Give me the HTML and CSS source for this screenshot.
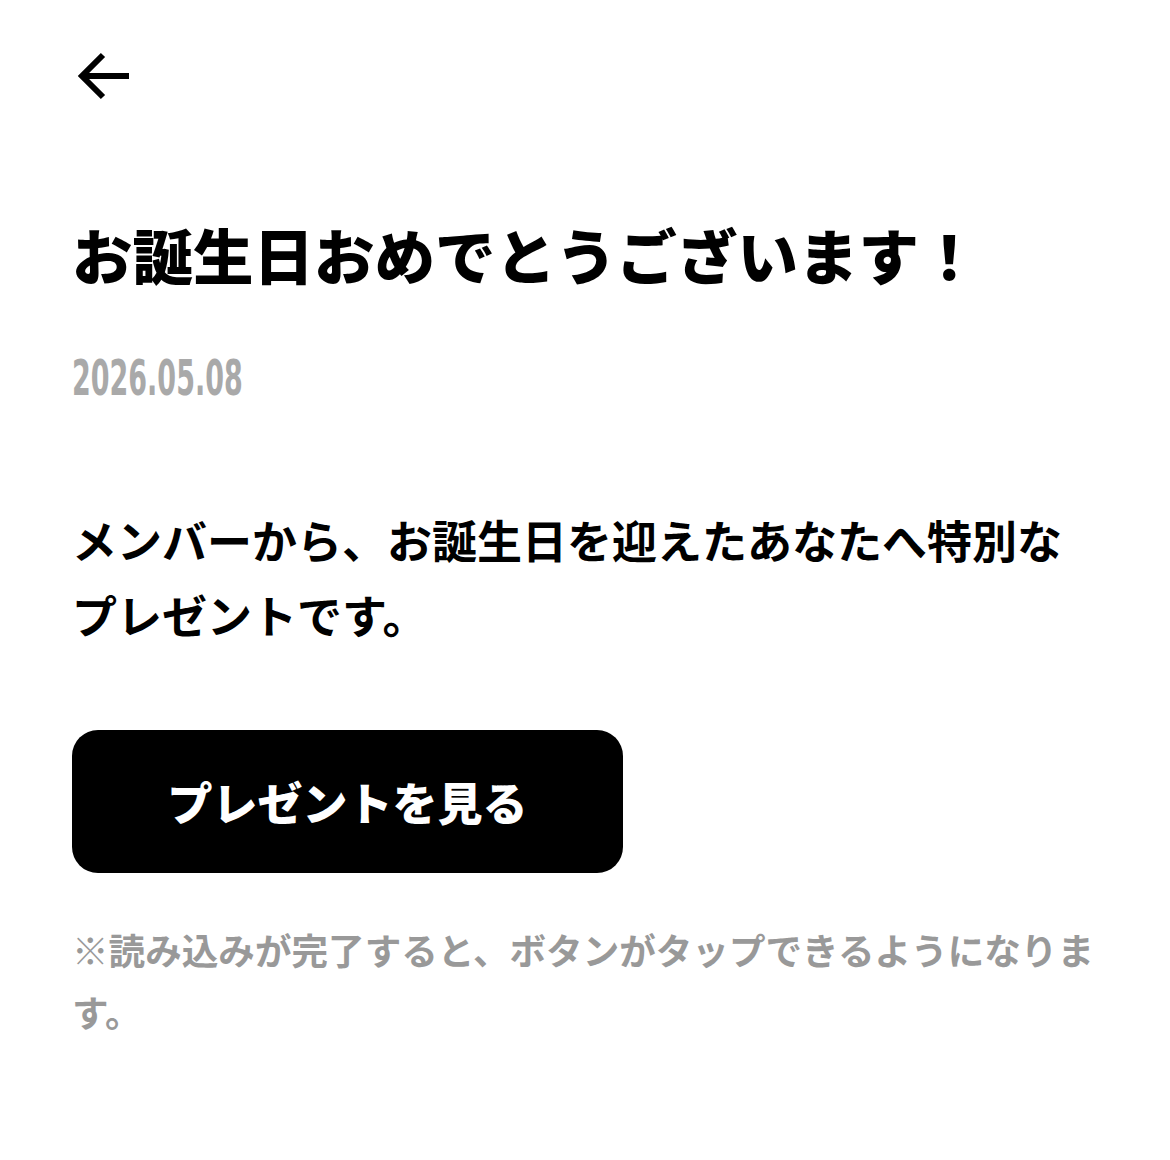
FILE: index.html
```html
<!DOCTYPE html>
<html lang="ja">
<head>
<meta charset="utf-8">
<title>お誕生日おめでとうございます！</title>
<link rel="stylesheet" href="styles.css">
</head>
<body>
<div class="page">
  <header class="header">
    <a class="back" href="#" aria-label="戻る">
      <svg width="60" height="56" viewBox="0 0 60 56" fill="none" stroke="#000" stroke-width="6" stroke-linecap="butt" stroke-linejoin="miter">
        <path d="M7 28 H54"/>
        <path d="M28 7 L7 28 L28 49"/>
      </svg>
    </a>
  </header>
  <main class="content">
    <h1 class="title">お誕生日おめでとうございます！</h1>
    <p class="date"><span>2026.05.08</span></p>
    <p class="message">メンバーから、お誕生日を迎えたあなたへ特別なプレゼントです。</p>
    <button class="btn" type="button">プレゼントを見る</button>
    <p class="note">※読み込みが完了すると、ボタンがタップできるようになります。</p>
  </main>
</div>
</body>
</html>
```

FILE: styles.css
```css
html, body {
  margin: 0;
  padding: 0;
  background: #fff;
}

body {
  font-family: "Noto Sans CJK JP", "Noto Sans", sans-serif;
  color: #000;
}

.page {
  width: 1170px;
  box-sizing: border-box;
  padding: 0 72px;
}

.header {
  padding-top: 48px;
  height: 56px;
}

.back {
  display: block;
  width: 60px;
  height: 56px;
  margin-left: 3px;
}

.back svg {
  display: block;
}

.content {
  display: flex;
  flex-direction: column;
  align-items: flex-start;
}

.title {
  margin: 114px 0 0;
  font-size: 60.5px;
  line-height: 72px;
  font-weight: 900;
  letter-spacing: 0;
}

.date {
  margin: 64px 0 0;
  font-family: "Liberation Sans Narrow", "DejaVu Sans Condensed", sans-serif;
  font-size: 50px;
  line-height: 48px;
  font-weight: 700;
  color: #a9a9a9;
}

.date span {
  display: inline-block;
  transform-origin: left center;
  transform: scaleX(0.6);
}

.message {
  margin: 100px 0 0;
  font-size: 45px;
  line-height: 75px;
  font-weight: 700;
}

.btn {
  margin-top: 78px;
  width: 551px;
  height: 143px;
  border: 0;
  border-radius: 26px;
  background: #000;
  color: #fff;
  font-family: "Noto Sans CJK JP", sans-serif;
  font-size: 45px;
  font-weight: 900;
  padding: 0;
  cursor: pointer;
}

.note {
  margin: 46px 0 0;
  font-size: 36.6px;
  line-height: 62px;
  font-weight: 700;
  color: #999;
}
```
